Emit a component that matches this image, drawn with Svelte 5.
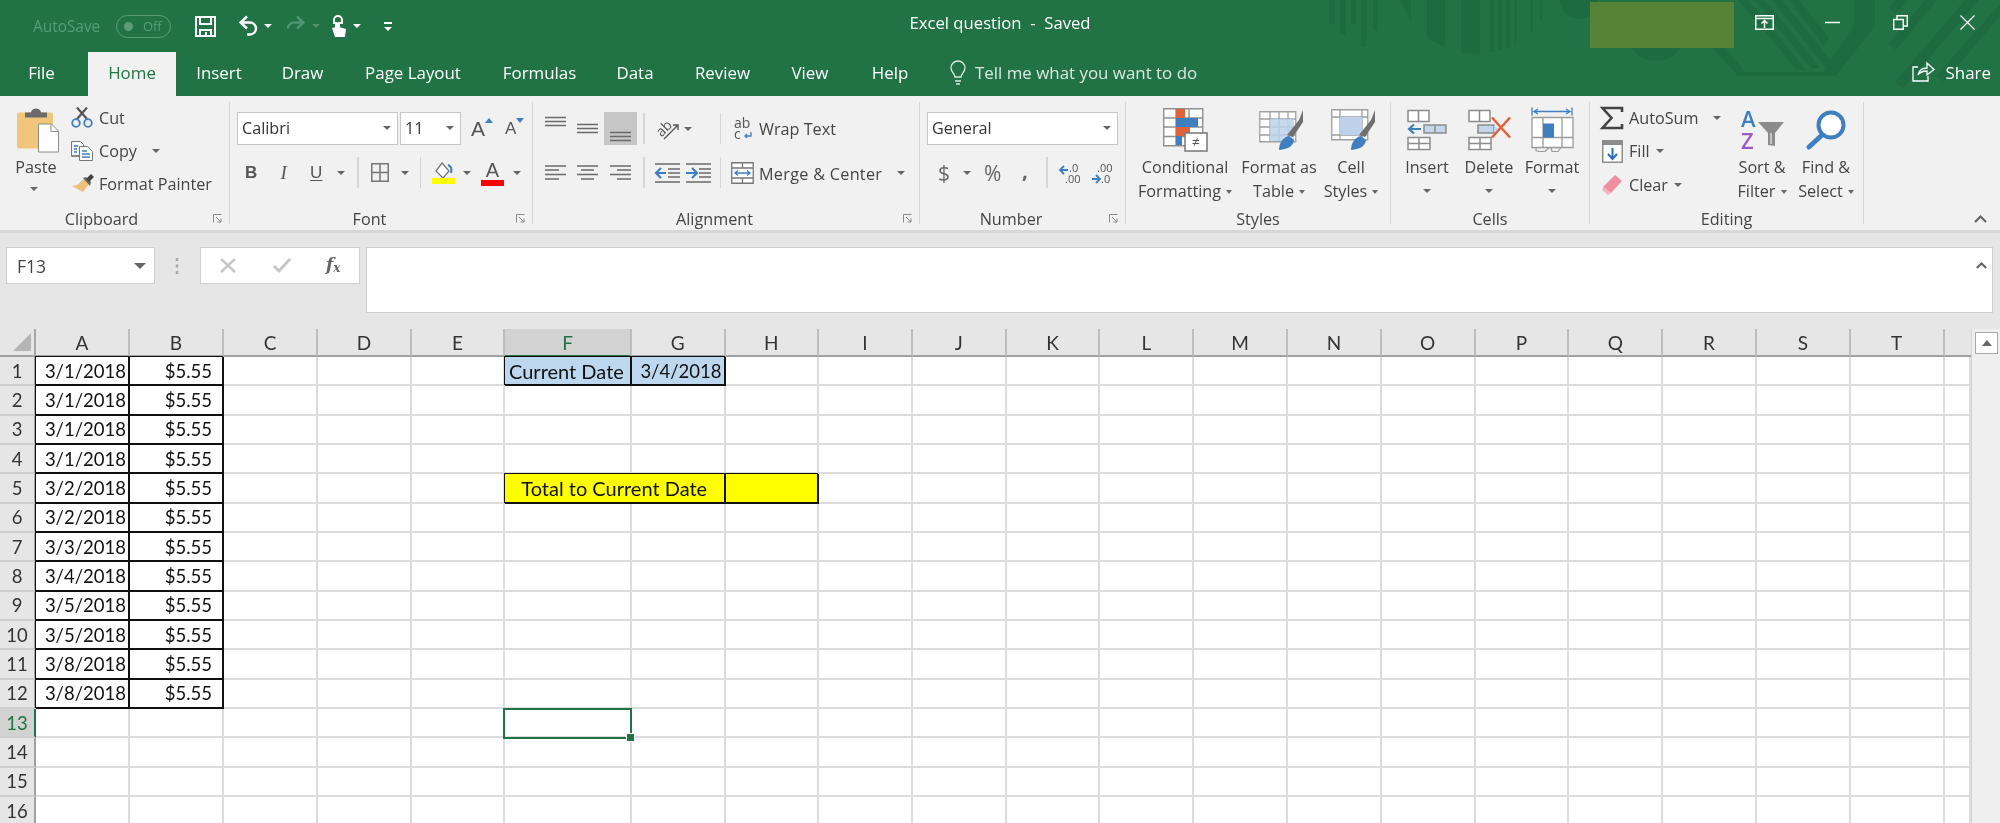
<script>
  const tabs = [
    { label: "File", w: 88 },
    { label: "Home", w: 88, active: true },
    { label: "Insert", w: 86 },
    { label: "Draw", w: 81 },
    { label: "Page Layout", w: 140 },
    { label: "Formulas", w: 113 },
    { label: "Data", w: 78 },
    { label: "Review", w: 97 },
    { label: "View", w: 78 },
    { label: "Help", w: 82 },
  ];

  // A..T plus the sliver of U before the scrollbar
  const columns = [
    ["A", 94], ["B", 94], ["C", 94], ["D", 94], ["E", 93], ["F", 127], ["G", 93.5], ["H", 93.5],
    ["I", 93.8], ["J", 93.8], ["K", 93.8], ["L", 93.8], ["M", 93.8], ["N", 93.8], ["O", 93.8],
    ["P", 93.8], ["Q", 93.8], ["R", 93.8], ["S", 93.8], ["T", 93.8], ["", 26],
  ];
  const gridCols = "36px " + columns.map((c) => c[1] + "px").join(" ");

  const dates = ["3/1/2018", "3/1/2018", "3/1/2018", "3/1/2018", "3/2/2018", "3/2/2018",
    "3/3/2018", "3/4/2018", "3/5/2018", "3/5/2018", "3/8/2018", "3/8/2018"];
  const rows = Array.from({ length: 16 }, (_, i) => i + 1);

  function cellFor(col, row) {
    if (row <= 12 && col === "A") return { text: dates[row - 1], cls: "boxed right num" };
    if (row <= 12 && col === "B") return { text: "$5.55", cls: "boxed money num" };
    if (row === 1 && col === "F") return { text: "Current Date", cls: "boxed blue" };
    if (row === 1 && col === "G") return { text: "3/4/2018", cls: "boxed blue right num" };
    if (row === 5 && col === "F") return { text: "Total to Current Date", cls: "boxed yellow merged" };
    if (row === 5 && col === "H") return { text: "", cls: "boxed yellow" };
    return { text: "", cls: "" };
  }
  const colsFor = (row) => columns.filter((c) => !(row === 5 && c[0] === "G"));
</script>

{#snippet caret()}<span class="caret"></span>{/snippet}

{#snippet launcher()}
  <svg class="launcher" width="10" height="9" viewBox="0 0 10 9"><path d="M.5.5h8M.5.5v8M3 3l5 5M8 4.5V8H4.5" fill="none" stroke="#8a8a8a"/></svg>
{/snippet}

<div class="app">
  <header class="chrome">
    <svg class="art" width="2000" height="96" viewBox="0 0 2000 96" aria-hidden="true">
      <g fill="#1e6b41">
        <rect x="1330" width="5" height="24"/><rect x="1340" width="6" height="35"/>
        <rect x="1351" width="5" height="24"/><rect x="1361" width="5" height="47"/>
        <rect x="1373" width="5" height="31"/>
        <path d="M1400 0h11v21z"/>
        <path d="M1427 0h18v48l-18-10z"/>
        <path d="M1461 0h19v55l-19-2z"/>
        <rect x="1490" width="4" height="52"/><rect x="1498" width="4" height="50"/>
        <rect x="1506" width="4" height="48"/><rect x="1514" width="3" height="44"/>
        <rect x="1530" width="3" height="32"/><rect x="1540" width="2" height="20"/>
        <path d="M1560 0h38a19 19 0 0 1-38 0z"/>
        <path d="M1630 40h52a26 21 0 0 1-52 0z"/>
        <path d="M1705 40l33 36h98l39-50V0h-21v26l-31 46h-78l-26-32z"/>
        <path d="M1738 0h10l58 70h-9zM1755 0h10l55 68h-9zM1772 0h10l50 62-6 6zM1789 0h10l30 38-5 8z"/>
        <path d="M1896 0h12l-12 14-7-6zM1925 0h12l-41 50-8-6zM1965 0h14l-76 88-8-6zM2000 4v12l-56 66-8-6z"/>
      </g>
    </svg>

    <div class="titlebar">
      <div class="qat">
        <span class="autosave">AutoSave</span>
        <span class="toggle"><i></i><b>Off</b></span>
        <svg class="save" width="21" height="21" viewBox="0 0 21 21"><path d="M1 1h19v19H1zM5 1v7h11V1M5 20v-6h11v6M11 16v4" fill="none" stroke="#fff" stroke-width="2"/></svg>
        <svg class="undo" width="20" height="22" viewBox="0 0 20 22"><path d="M9 1.5L2.5 7.5 9 13.5M3 7.5h9a6 6 0 0 1 0 12H9" fill="none" stroke="#fff" stroke-width="2.4"/></svg>
        <span class="caret white q1"></span>
        <svg class="redo" width="20" height="22" viewBox="0 0 20 22"><path d="M11 1.5l6.5 6-6.500 6M17 7.500H8a6 6 0 0 0-6 6" fill="none" stroke="#4f9470" stroke-width="2.4"/></svg>
        <span class="caret dim q2"></span>
        <svg class="touch" width="17" height="24" viewBox="0 0 17 24"><path d="M4 6a4 4 0 0 1 8 0v3H9v4H6V9H4z" fill="none" stroke="#fff" stroke-width="2"/><path d="M6 9v4l-4 1 3 9h10l1-8-7-2V8z" fill="#fff"/></svg>
        <span class="caret white q3"></span>
        <span class="custom"><i></i><span class="caret white"></span></span>
      </div>
      <div class="doc-title">Excel question&nbsp; -&nbsp; Saved</div>
      <div class="winctl">
        <div class="redacted"></div>
        <svg class="wc-disp" width="19" height="15" viewBox="0 0 19 15"><path d="M.75.75h17.500v13.500H.75zM.75 3.500h17.500M9.500 13V6M6.500 8.500l3-3 3 3" fill="none" stroke="#fff" stroke-width="1.500"/></svg>
        <svg class="wc-min" width="15" height="15" viewBox="0 0 15 15"><path d="M0 7.500h15" stroke="#fff" stroke-width="1.500"/></svg>
        <svg class="wc-res" width="15" height="15" viewBox="0 0 15 15"><path d="M.75 4.500h9.500v9.750H.75zM4 4.500V.75h10.250V11h-4" fill="none" stroke="#fff" stroke-width="1.400"/></svg>
        <svg class="wc-close" width="15" height="15" viewBox="0 0 15 15"><path d="M.5.5l14 14M14.500.5l-14 14" stroke="#fff" stroke-width="1.300"/></svg>
      </div>
    </div>

    <nav class="tabs">
      {#each tabs as t}
        <div class="tab" class:active={t.active} class:file={t.label === "File"} style:width="{t.w}px">{t.label}</div>
      {/each}
      <svg class="bulb" width="16" height="24" viewBox="0 0 16 24"><path d="M5 16c0-3-4-5-4-9a7 7 0 0 1 14 0c0 4-4 6-4 9zM5 20h6M6 23h4" fill="none" stroke="#dbe9e1" stroke-width="1.300"/></svg>
      <span class="tell">Tell me what you want to do</span>
      <span class="share">
        <svg width="23" height="20" viewBox="0 0 23 20"><path d="M6 5H1v14h15v-5M6 13c1-5 5-7 9-7V1l7 6.500L15 13V9c-4 0-7 1-9 4z" fill="none" stroke="#fff" stroke-width="1.300"/></svg>
        Share
      </span>
    </nav>
  </header>

  <section class="ribbon">
    <div class="group g-clip">
      <div class="body">
        <div class="big paste">
          <svg width="42" height="45" viewBox="0 0 42 45"><rect y="5" width="36" height="36" rx="2" fill="#f0c67a"/><path d="M8 10V5h6a5 4 0 0 1 10 0h6v5z" fill="#6a6a6a"/><path d="M21.500 16.500h13l7 7v21h-20z" fill="#fff" stroke="#8c8c8c"/><path d="M34 17v7h7" fill="none" stroke="#8c8c8c"/></svg>
          <span class="line">Paste</span>
          {@render caret()}
        </div>
        <div class="stack clip-stack">
          <div class="row"><span class="ico">
            <svg width="22" height="21" viewBox="0 0 22 21"><path d="M6 12L16 .5M16 12L6 .5" stroke="#555" stroke-width="2.200"/><circle cx="5" cy="16" r="3.800" fill="none" stroke="#3f7fbf" stroke-width="1.800"/><circle cx="17" cy="16" r="3.800" fill="none" stroke="#3f7fbf" stroke-width="1.800"/></svg>
          </span>Cut</div>
          <div class="row"><span class="ico">
            <svg width="22" height="20" viewBox="0 0 22 20"><path d="M.5.500h9l3 3v3M8 15H.5z" fill="#fff" stroke="#777"/><path d="M.5.500v14.500H8" fill="none" stroke="#777"/><path d="M8.500 5.500h8l5 5v9h-13z" fill="#fff" stroke="#777"/><path d="M3 5h4M3 8h3M3 11h3M11 10h5M11 13h8M11 16h8" stroke="#3f7fbf" stroke-width="1.300"/></svg>
          </span>Copy<span class="caret copy-caret"></span></div>
          <div class="row"><span class="ico">
            <svg width="23" height="20" viewBox="0 0 23 20"><path d="M13 5l5 5-6 8-11-6 5-1z" fill="#eec07e"/><path d="M12 4l3-1 5 5-1 4z" fill="#666"/><path d="M15 5l5-5 3 3-5 5z" fill="#444"/></svg>
          </span>Format Painter</div>
        </div>
      </div>
      <div class="label l-clip">Clipboard</div>
      {@render launcher()}
    </div>

    <div class="group g-font">
      <div class="body col">
        <div class="r1">
          <div class="combo font-name"><span>Calibri</span>{@render caret()}</div>
          <div class="combo font-size"><span>11</span>{@render caret()}</div>
          <span class="grow">A<svg width="8" height="5" viewBox="0 0 8 5"><path d="M4 0l4 5H0z" fill="#3f7fbf"/></svg></span>
          <span class="shrink">A<svg width="8" height="5" viewBox="0 0 8 5"><path d="M4 5L0 0h8z" fill="#3f7fbf"/></svg></span>
        </div>
        <div class="r2">
          <span class="tb biu bold">B</span>
          <span class="tb biu ital">I</span>
          <span class="tb biu under">U</span>
          <span class="caret biu-c"></span>
          <span class="sep s-borders"></span>
          <svg class="borders" width="18" height="19" viewBox="0 0 18 19"><path d="M.75.750h16.500v17.500H.75zM9 .750v17.500M.75 9.500h16.500" fill="none" stroke="#777" stroke-width="1.500"/></svg>
          <span class="caret bord-c"></span>
          <span class="sep s-fill"></span>
          <svg class="fillc" width="23" height="22" viewBox="0 0 23 22"><path d="M10 1l7 8-6 7-7-7z" fill="#fff" stroke="#777" stroke-width="1.300"/><path d="M16 3c3 1 4 4 3 8" fill="none" stroke="#3f7fbf" stroke-width="2"/><rect y="16" width="23" height="6" fill="#ffff00"/></svg>
          <span class="caret fill-c"></span>
          <span class="fontcolor">A</span>
          <span class="caret fc-c"></span>
        </div>
      </div>
      <div class="label l-launch">Font</div>
      {@render launcher()}
    </div>

    <div class="group g-align">
      <div class="body col">
        <div class="r1">
          <span class="tb al"><svg class="up" width="21" height="12" viewBox="0 0 21 12"><path d="M0 1.500h21M0 5.500h21M0 9.500h21" stroke="#6a6a6a" stroke-width="1.500"/></svg></span>
          <span class="tb al"><svg width="21" height="12" viewBox="0 0 21 12"><path d="M0 1.500h21M0 5.500h21M0 9.500h21" stroke="#6a6a6a" stroke-width="1.500"/></svg></span>
          <span class="tb al on"><svg class="down" width="21" height="12" viewBox="0 0 21 12"><path d="M0 2.500h21M0 6.500h21M0 10.500h21" stroke="#6a6a6a" stroke-width="1.500"/></svg></span>
          <span class="sep v1"></span>
          <span class="orient"><svg width="25" height="24" viewBox="0 0 25 24"><text x="1" y="17" transform="rotate(-45 8 12)" class="svgt">ab</text><path d="M9 22L23 8M18 8h5v5" fill="none" stroke="#555" stroke-width="1.400"/></svg>{@render caret()}</span>
          <span class="sep v2"></span>
          <span class="wide"><svg width="20" height="22" viewBox="0 0 20 22"><text x="0" y="10" class="svgt">ab</text><text x="0" y="21" class="svgt">c</text><path d="M17 14v4h-6M13 16l-2 2 2 2" fill="none" stroke="#3f7fbf" stroke-width="1.300"/></svg>Wrap Text</span>
        </div>
        <div class="r2">
          <span class="tb al"><svg width="21" height="15" viewBox="0 0 21 15"><path d="M0 1h21M0 5h14M0 9.500h21M0 14h14" stroke="#6a6a6a" stroke-width="1.500"/></svg></span>
          <span class="tb al"><svg width="21" height="15" viewBox="0 0 21 15"><path d="M0 1h21M4 5h13M0 9.500h21M4 14h13" stroke="#6a6a6a" stroke-width="1.500"/></svg></span>
          <span class="tb al"><svg width="21" height="15" viewBox="0 0 21 15"><path d="M0 1h21M7 5h14M0 9.500h21M7 14h14" stroke="#6a6a6a" stroke-width="1.500"/></svg></span>
          <span class="sep v1"></span>
          <span class="indents">
            <svg width="25" height="20" viewBox="0 0 25 20"><path d="M0 1h25M13 6h12M13 10h12M13 14h12M0 19h25" stroke="#6a6a6a" stroke-width="1.500"/><path d="M1 10h10M6 5l-5 5 5 5" fill="none" stroke="#3f7fbf" stroke-width="2.200"/></svg>
            <svg width="25" height="20" viewBox="0 0 25 20"><path d="M0 1h25M13 6h12M13 10h12M13 14h12M0 19h25" stroke="#6a6a6a" stroke-width="1.500"/><path d="M0 10h10M6 5l5 5-5 5" fill="none" stroke="#3f7fbf" stroke-width="2.200"/></svg>
          </span>
          <span class="sep v2"></span>
          <span class="wide merge"><svg width="23" height="22" viewBox="0 0 23 22"><path d="M.75.750h21.500v20.500H.75zM.75 6h21.500M.75 16h21.500M11.500 1v5M11.500 16v5" fill="#fff" stroke="#777" stroke-width="1.300"/><path d="M4 11h15M7 8.500L4 11l3 2.500M16 8.500l3 2.500-3 2.500" fill="none" stroke="#3f7fbf" stroke-width="1.300"/></svg><span class="mtext">Merge &amp; Center</span><span class="caret m-c"></span></span>
        </div>
      </div>
      <div class="label l-launch">Alignment</div>
      {@render launcher()}
    </div>

    <div class="group g-num">
      <div class="body col">
        <div class="r1"><div class="combo general"><span>General</span>{@render caret()}</div></div>
        <div class="r2">
          <span class="dollar">$</span><span class="caret d-c"></span>
          <span class="pct">%</span>
          <span class="comma">,</span>
          <span class="sep n-s"></span>
          <span class="dec"><svg width="21" height="22" viewBox="0 0 21 22"><path d="M0 8h8M4 4L0 8l4 4" fill="none" stroke="#3f7fbf" stroke-width="1.800"/><text x="9" y="10" class="svgd">.0</text><text x="5" y="21" class="svgd">.00</text></svg></span>
          <span class="dec d2"><svg width="21" height="22" viewBox="0 0 21 22"><text x="5" y="10" class="svgd">.00</text><path d="M0 17h8M4 13l4 4-4 4" fill="none" stroke="#3f7fbf" stroke-width="1.800"/><text x="9" y="21" class="svgd">.0</text></svg></span>
        </div>
      </div>
      <div class="label l-launch">Number</div>
      {@render launcher()}
    </div>

    <div class="group g-styles">
      <div class="body">
        <div class="big s1">
          <svg width="44" height="44" viewBox="0 0 44 44"><path d="M.75.750h39v37h-39zM.75 10h39M.75 19h39M.75 28.500h39M13 .750v37M26 .750v37" fill="#fff" stroke="#909090" stroke-width="1.400"/><rect x="13" y="1" width="9" height="9" fill="#e0623a"/><rect x="13" y="10" width="22" height="9" fill="#3f7fbf"/><rect x="13" y="19" width="14" height="9" fill="#e0623a"/><rect x="13" y="28" width="6" height="9" fill="#3f7fbf"/><rect x="22" y="25" width="22" height="18" fill="#fff" stroke="#777" stroke-width="1.500"/><text x="33" y="39" text-anchor="middle" class="svgt">≠</text></svg>
          <span class="line">Conditional</span><span class="line">Formatting{@render caret()}</span>
        </div>
        <div class="big s2">
          <svg width="44" height="44" viewBox="0 0 44 44"><path d="M.75 3.750h36v30h-36zM.75 11h36M.75 19h36M.75 27h36M11 3.750v30M20 3.750v30M29 3.750v30" fill="#fff" stroke="#a0a0a0" stroke-width="1.300"/><rect x="11" y="11" width="24" height="22" fill="#bdd2ea" opacity=".85"/><path d="M28 27l12-15 4-10 .0 12-10 15z" fill="#6f6f6f"/><path d="M20 42c0-7 4-13 10-14l5 4c-1 6-5 9-15 10z" fill="#3f7fbf"/></svg>
          <span class="line">Format as</span><span class="line">Table{@render caret()}</span>
        </div>
        <div class="big s3">
          <svg width="44" height="44" viewBox="0 0 44 44"><path d="M.75 1.750h36v30h-36zM.75 9h36M.75 27h36M9 1.750v30M31 1.750v30" fill="#fff" stroke="#a0a0a0" stroke-width="1.300"/><rect x="9" y="9" width="22" height="18" fill="#bdd2ea"/><path d="M28 27l12-15 4-10 0 12-10 15z" fill="#6f6f6f"/><path d="M20 42c0-7 4-13 10-14l5 4c-1 6-5 9-15 10z" fill="#3f7fbf"/></svg>
          <span class="line">Cell</span><span class="line">Styles{@render caret()}</span>
        </div>
      </div>
      <div class="label">Styles</div>
    </div>

    <div class="group g-cells">
      <div class="body">
        <div class="big">
          <svg width="40" height="41" viewBox="0 0 40 41"><g fill="#fff" stroke="#8c8c8c" stroke-width="1.500"><path d="M1 1h21v11H1zM11.500 1v11M1 28h22v12H1zM12 28v12M1 34h22"/><path d="M17 15.500h22v8H17z" fill="#c3d6ec"/><path d="M28 15.500v8"/></g><path d="M2 19.500h12M7 15l-5 4.500L7 24" fill="none" stroke="#3f7fbf" stroke-width="2.200"/></svg>
          <span class="line">Insert</span><span class="line cline">{@render caret()}</span>
        </div>
        <div class="big">
          <svg width="43" height="41" viewBox="0 0 43 41"><g fill="#fff" stroke="#8c8c8c" stroke-width="1.500"><path d="M1 1h21v11H1zM11.500 1v11M1 28h22v12H1zM12 28v12M1 34h22"/><path d="M10 15.500h16v8H10z" fill="#c3d6ec"/></g><path d="M26 16l5 3.500-5 3.500z" fill="#c3d6ec"/><path d="M24 8l18 20M42 8L24 28" stroke="#e0623a" stroke-width="2.600"/></svg>
          <span class="line">Delete</span><span class="line cline">{@render caret()}</span>
        </div>
        <div class="big">
          <svg width="43" height="45" viewBox="0 0 43 45"><path d="M1 0v8M41 0v8M3 4h36M7 1.500L3 4l4 2.500M35 1.500L39 4l-4 2.500" fill="none" stroke="#3f7fbf" stroke-width="1.300"/><path d="M1 10h41v30H1zM1 30h41M12 10v30M31 10v30" fill="#fff" stroke="#9a9a9a" stroke-width="1.300"/><rect x="12" y="16" width="11" height="14" fill="#3f7fbf"/><path d="M5 40v3l3 1h6l4-4M20 40l1 4h6l3-4" fill="none" stroke="#9a9a9a" stroke-width="1.200"/></svg>
          <span class="line">Format</span><span class="line cline">{@render caret()}</span>
        </div>
      </div>
      <div class="label">Cells</div>
    </div>

    <div class="group g-edit">
      <div class="body">
        <div class="stack edit-stack">
          <div class="row"><span class="ico"><svg width="22" height="22" viewBox="0 0 22 22"><path d="M21 5V1H1.500l9 10-9 10H21v-4" fill="none" stroke="#444" stroke-width="2.600"/></svg></span>AutoSum<span class="caret as-c"></span></div>
          <div class="row"><span class="ico"><svg width="21" height="23" viewBox="0 0 21 23"><rect x=".75" y=".75" width="19.500" height="21.500" fill="#fff" stroke="#8c8c8c" stroke-width="1.500"/><rect x="1" y="1" width="19" height="4" fill="#8c8c8c"/><path d="M10.500 8v11M6 14l4.500 5 4.500-5" fill="none" stroke="#2b6fb5" stroke-width="2"/></svg></span>Fill{@render caret()}</div>
          <div class="row"><span class="ico"><svg width="20" height="20" viewBox="0 0 20 20"><path d="M13 0l7 6-11 12-8-6z" fill="#ef8ea0"/><path d="M1 12l8 6-3 2-6-5z" fill="#f4b4c0"/></svg></span>Clear{@render caret()}</div>
        </div>
        <div class="big sort">
          <svg width="43" height="40" viewBox="0 0 43 40"><text x="0" y="17" class="az a">A</text><text x="0" y="39" class="az z">Z</text><path d="M17 12h26L34 23v13l-7-1V23z" fill="#8c8c8c"/><path d="M30 23v11" stroke="#fff"/></svg>
          <span class="line">Sort &amp;</span><span class="line">Filter{@render caret()}</span>
        </div>
        <div class="big find">
          <svg width="40" height="40" viewBox="0 0 40 40"><circle cx="25" cy="15" r="12.500" fill="#fff" stroke="#3f7fbf" stroke-width="4"/><path d="M16 25L3 37" stroke="#3f7fbf" stroke-width="5" stroke-linecap="round"/></svg>
          <span class="line">Find &amp;</span><span class="line">Select{@render caret()}</span>
        </div>
      </div>
      <div class="label">Editing</div>
    </div>

    <svg class="collapse" width="13" height="8" viewBox="0 0 13 8"><path d="M1 7l5.500-5.500L12 7" fill="none" stroke="#666" stroke-width="2.200"/></svg>
  </section>

  <section class="formula">
    <div class="namebox"><span>F13</span><span class="caret big-caret"></span></div>
    <svg class="grip" width="4" height="16" viewBox="0 0 4 16"><path d="M2 0v3M2 6.500v3M2 13v3" stroke="#a8a8a8" stroke-width="2.500"/></svg>
    <div class="fbtns">
      <svg width="16" height="15" viewBox="0 0 16 15"><path d="M1 1l14 13M15 1L1 14" stroke="#c6c6c6" stroke-width="2.400"/></svg>
      <svg width="18" height="15" viewBox="0 0 18 15"><path d="M1 8l5 5L17 1" fill="none" stroke="#c6c6c6" stroke-width="2.800"/></svg>
      <span class="fx">f<sub>x</sub></span>
    </div>
    <div class="finput">
      <svg width="11" height="7" viewBox="0 0 11 7"><path d="M.8 6L5.500 1.500 10.200 6" fill="none" stroke="#666" stroke-width="2.200"/></svg>
    </div>
  </section>

  <section class="sheetwrap">
    <div class="sheet" style:grid-template-columns={gridCols}>
      <div class="corner"><svg width="18" height="18" viewBox="0 0 18 18"><path d="M18 0v18H0z" fill="#b5b5b5"/></svg></div>
      {#each columns as c, i}
        <div class="colhead" class:sel={c[0] === "F"} class:last={i === columns.length - 1}>{c[0]}</div>
      {/each}

      {#each rows as r}
        <div class="rowhead" class:sel={r === 13}>{r}</div>
        {#each colsFor(r) as c}
          {@const cell = cellFor(c[0], r)}
          <div class="cell {cell.cls}">{cell.text}</div>
        {/each}
      {/each}

      <div class="selection"><i></i></div>
    </div>
    <aside class="scroll">
      <div class="up-btn"><span></span></div>
    </aside>
  </section>
</div>

<style>
  :global(body) {
    margin: 0;
    background: #fff;
  }

  .app {
    width: 2000px;
    height: 823px;
    overflow: hidden;
    font-family: "Open Sans", "Noto Sans", sans-serif;
    font-size: 16.2px;
    color: #444;
    background: #e6e6e6;
    filter: blur(0.35px);
  }

  svg {
    display: block;
    flex: none;
    overflow: visible;
  }

  /* window chrome */
  .chrome {
    position: relative;
    height: 96px;
    background: #217346;
    color: #fff;
    overflow: hidden;
  }
  .art {
    position: absolute;
    left: 0;
    top: 0;
  }
  .titlebar {
    position: relative;
    display: grid;
    grid-template-columns: 1fr auto 1fr;
    height: 52px;
  }
  .qat {
    display: flex;
    align-items: center;
    padding-left: 33px;
  }
  .autosave {
    width: 83px;
    color: #5a9c79;
    font-size: 15.4px;
  }
  .toggle {
    box-sizing: border-box;
    display: flex;
    align-items: center;
    width: 55px;
    height: 23px;
    border: 1.5px solid #5a9c79;
    border-radius: 12px;
    padding-left: 7px;
    color: #5a9c79;
  }
  .toggle i {
    width: 9px;
    height: 9px;
    border-radius: 50%;
    background: #5a9c79;
  }
  .toggle b {
    font-weight: 400;
    font-size: 13px;
    margin-left: 10px;
  }
  .save { margin-left: 24px; }
  .undo { margin-left: 22px; }
  .q1 { margin-left: 9px; }
  .redo { margin-left: 14px; }
  .q2 { margin-left: 9px; }
  .touch { margin-left: 10px; }
  .q3 { margin-left: 12px; }
  .custom {
    display: flex;
    flex-direction: column;
    align-items: center;
    gap: 3px;
    margin-left: 23px;
  }
  .custom i {
    width: 8px;
    height: 2px;
    background: #fff;
  }
  .doc-title {
    align-self: center;
    font-size: 16.7px;
    white-space: nowrap;
    margin-top: -8px;
  }
  .winctl {
    display: flex;
    justify-content: flex-end;
    align-items: flex-start;
    padding-right: 25px;
  }
  .redacted {
    width: 144px;
    height: 46px;
    margin: 2px 21px 0 0;
    background: #558235;
  }
  .winctl svg { margin-top: 15px; }
  .wc-min { margin-left: 51px; }
  .wc-res { margin-left: 53px; }
  .wc-close { margin-left: 52px; }

  .tabs {
    position: relative;
    display: flex;
    align-items: center;
    height: 44px;
    font-size: 16.9px;
  }
  .tab {
    box-sizing: border-box;
    display: flex;
    align-items: center;
    justify-content: center;
    height: 44px;
    padding-bottom: 4px;
  }
  .tab.file { padding-right: 5px; }
  .tab.active {
    background: #f1f1f1;
    color: #217346;
  }
  .bulb { margin-left: 19px; margin-top: -3px; }
  .tell {
    margin-left: 9px;
    margin-top: -4px;
    color: #dbe9e1;
  }
  .share {
    display: flex;
    align-items: center;
    gap: 11px;
    margin-left: auto;
    margin-top: -4px;
    padding-right: 9px;
  }

  /* ribbon */
  .ribbon {
    position: relative;
    display: flex;
    height: 134px;
    background: #f1f1f1;
    border-bottom: 3px solid #d8d8d8;
  }
  .group {
    position: relative;
    box-sizing: border-box;
    display: flex;
    flex-direction: column;
    height: 122px;
    margin-top: 6px;
    border-right: 1.5px solid #d6d6d6;
    white-space: nowrap;
  }
  .g-clip { width: 230px; }
  .g-font { width: 303px; }
  .g-align { width: 387px; }
  .g-num { width: 206px; }
  .g-styles { width: 265px; }
  .g-cells { width: 199px; }
  .g-edit { width: 274px; }

  .body {
    display: flex;
    flex: none;
    height: 107px;
  }
  .body.col {
    flex-direction: column;
    padding-top: 10px;
    height: 97px;
  }
  .label {
    text-align: center;
    line-height: 18px;
    margin-top: 1px;
  }
  .l-clip { padding-right: 26px; }
  .l-launch { padding-right: 23px; }
  .launcher {
    position: absolute;
    right: 6px;
    bottom: 1px;
  }

  .caret {
    display: inline-block;
    flex: none;
    width: 0;
    height: 0;
    margin-left: 6px;
    vertical-align: middle;
    border-left: 4px solid transparent;
    border-right: 4px solid transparent;
    border-top: 4.5px solid #666;
  }
  .caret.white { border-top-color: #fff; }
  .caret.dim { border-top-color: #4f9470; }
  .custom .caret { margin-left: 0; }

  .big {
    display: flex;
    flex-direction: column;
    align-items: center;
    box-sizing: border-box;
    padding-top: 5px;
    height: 107px;
  }
  .big > svg {
    height: 46px;
    margin-bottom: 1.5px;
  }
  .line {
    height: 24px;
    line-height: 24px;
  }
  .cline { display: flex; align-items: center; }
  .cline .caret { margin: 0; }

  .stack { display: flex; flex-direction: column; }
  .row {
    display: flex;
    align-items: center;
    height: 33px;
  }
  .ico {
    display: flex;
    justify-content: center;
    align-items: center;
    width: 22px;
    margin-right: 6px;
  }

  .paste {
    width: 42px;
    margin-left: 17px;
  }
  .paste .line { margin-right: 4px; }
  .paste .caret { margin: 8px 8px 0 0; }
  .clip-stack { margin-left: 12px; margin-top: -1px; }
  .copy-caret { margin-left: 15px; }

  .r1 {
    display: flex;
    align-items: center;
    height: 33px;
  }
  .r2 {
    display: flex;
    align-items: center;
    height: 31px;
    margin-top: 12px;
  }

  .combo {
    box-sizing: border-box;
    display: flex;
    align-items: center;
    justify-content: space-between;
    height: 33px;
    padding: 0 6px 1px 4px;
    background: #fff;
    border: 1.5px solid #c6c6c6;
    color: #333;
  }
  .g-font .r1 { padding-left: 7px; }
  .g-font .r2 { padding-left: 5px; }
  .font-name { width: 161px; }
  .font-size { width: 61px; margin-left: 2px; }

  .grow, .shrink {
    display: flex;
    align-items: flex-start;
    line-height: 26px;
    color: #555;
    font-family: "Liberation Sans", sans-serif;
  }
  .grow { margin-left: 10px; font-size: 21px; }
  .shrink { margin-left: 12px; font-size: 17px; }
  .grow svg, .shrink svg { margin-top: 2px; }

  .tb {
    display: flex;
    justify-content: center;
    align-items: center;
    flex: none;
    width: 32.5px;
  }
  .biu {
    font-family: "Liberation Sans", sans-serif;
    font-size: 17px;
    color: #555;
  }
  .bold { font-weight: 700; }
  .ital { font-style: italic; font-family: "Liberation Serif", serif; font-size: 19px; }
  .under { text-decoration: underline; text-underline-offset: 2px; }
  .biu-c { margin-left: 4.5px; }
  .sep {
    flex: none;
    width: 1.5px;
    height: 31px;
    background: #d6d6d6;
  }
  .s-borders { margin-left: 12px; }
  .borders { margin-left: 12px; }
  .bord-c { margin-left: 12px; }
  .s-fill { margin-left: 11px; }
  .fillc { margin-left: 11px; }
  .fill-c { margin-left: 8px; }
  .fontcolor {
    box-sizing: border-box;
    width: 23px;
    height: 26px;
    margin-left: 10px;
    font-family: "Liberation Sans", sans-serif;
    font-size: 20px;
    line-height: 20px;
    text-align: center;
    color: #555;
    border-bottom: 6px solid #f00;
  }
  .fc-c { margin-left: 9px; }

  .g-align .r1, .g-align .r2 { padding-left: 6px; }
  .al { height: 33px; }
  .on { background: #c6c6c6; }
  .al .up { margin-bottom: 13px; }
  .al .down { margin-top: 14px; }
  .v1 { margin-left: 6.500px; }
  .orient {
    display: flex;
    align-items: center;
    width: 75px;
    padding-left: 10px;
    box-sizing: border-box;
  }
  .orient .caret { margin-left: 4px; }
  .indents {
    display: flex;
    gap: 6px;
    width: 75px;
    padding-left: 10px;
    box-sizing: border-box;
  }
  .wide {
    display: flex;
    align-items: center;
    gap: 5px;
    margin-left: 13px;
    color: #444;
  }
  .merge { margin-left: 10px; }
  .mtext { padding-top: 2px; letter-spacing: 0.3px; }
  .m-c { margin-left: 10px; }
  .svgt {
    font-family: "Open Sans", sans-serif;
    font-size: 14px;
    fill: #555;
  }
  .svgd {
    font-family: "Open Sans", sans-serif;
    font-size: 11px;
    fill: #555;
  }

  .g-num .r1 { padding-left: 7px; }
  .general { width: 191px; padding-right: 6px; }
  .g-num .r2 { padding-left: 18px; color: #666; }
  .dollar { font-size: 21px; width: 12px; }
  .d-c { margin-left: 13px; }
  .pct { font-size: 21px; margin-left: 13px; width: 20px; }
  .comma { font-size: 21px; font-weight: 700; margin-left: 18px; width: 10px; margin-top: -6px; }
  .n-s { margin-left: 14px; }
  .dec { margin-left: 12px; }
  .dec.d2 { margin-left: 11px; }

  .g-styles .body { padding-left: 12px; }
  .s1, .s2 { width: 94px; }
  .s2 > svg { margin-left: 4px; }
  .s3 { width: 50px; }
  .s3 > svg { margin-left: 4px; }
  .big .line .caret { margin-left: 5px; border-left-width: 3.500px; border-right-width: 3.500px; border-top-width: 4px; }
  .big .cline .caret { margin-left: 0; border-left-width: 4px; border-right-width: 4px; border-top-width: 4.500px; }

  .g-cells .body { padding-left: 5px; }
  .g-cells .big { width: 62px; }
  .g-cells .big:last-child { width: 64px; }

  .edit-stack { margin-left: 11px; margin-top: -1px; width: 132px; }
  .edit-stack .row { height: 33.500px; }
  .as-c { margin-left: 15px; }
  .sort { width: 58px; }
  .find { width: 70px; }
  .az {
    font-family: "Open Sans", sans-serif;
    font-size: 22px;
    font-weight: 600;
  }
  .az.a { fill: #3f7fbf; }
  .az.z { fill: #9a5cc0; }

  .collapse {
    position: absolute;
    right: 13px;
    bottom: 7px;
  }

  /* formula bar */
  .formula {
    display: flex;
    align-items: flex-start;
    height: 96px;
    padding: 14px 7px 0 6px;
    box-sizing: border-box;
    background: #e6e6e6;
  }
  .namebox {
    box-sizing: border-box;
    display: flex;
    align-items: center;
    justify-content: space-between;
    width: 149px;
    height: 37px;
    padding: 0 8px 0 10px;
    background: #fff;
    border: 1.5px solid #cfcfcf;
    font-size: 17.5px;
    color: #444;
  }
  .big-caret {
    border-left-width: 6px;
    border-right-width: 6px;
    border-top-width: 6px;
  }
  .grip { margin: 11px 0 0 20px; }
  .fbtns {
    box-sizing: border-box;
    display: flex;
    align-items: center;
    width: 160px;
    height: 37px;
    margin-left: 21px;
    padding-left: 19px;
    background: #fff;
    border: 1.5px solid #cfcfcf;
  }
  .fbtns svg:nth-child(2) { margin-left: 37px; }
  .fx {
    margin-left: 35px;
    font-family: "DejaVu Serif", serif;
    font-style: italic;
    font-weight: 700;
    font-size: 17px;
    line-height: 20px;
    color: #666;
  }
  .fx sub { font-size: 12px; vertical-align: -2px; }
  .finput {
    box-sizing: border-box;
    flex: 1;
    display: flex;
    justify-content: flex-end;
    height: 66px;
    margin-left: 6px;
    padding: 14px 5px 0 0;
    background: #fff;
    border: 1.5px solid #cfcfcf;
  }

  /* sheet */
  .sheetwrap {
    display: flex;
    background: #fff;
  }
  .sheet {
    position: relative;
    display: grid;
    grid-template-rows: 28px repeat(16, 29.35px);
    width: 1971px;
    flex: none;
    font-family: Lato, "Liberation Sans", sans-serif;
    font-size: 20px;
    color: #111;
    border-right: 1px solid #d4d4d4;
  }
  .corner {
    display: flex;
    align-items: center;
    justify-content: flex-end;
    padding-right: 3px;
    background: #e6e6e6;
    border-right: 2px solid #a8a8a8;
    border-bottom: 2px solid #a0a0a0;
  }
  .colhead {
    box-sizing: border-box;
    display: flex;
    align-items: center;
    justify-content: center;
    font-size: 19px;
    background: #e6e6e6;
    border-right: 2px solid #bdbdbd;
    border-bottom: 2px solid #a0a0a0;
    color: #333;
  }
  .colhead.last { border-right: none; }
  .colhead.sel {
    background: #d2d2d2;
    color: #217346;
    border-bottom-color: #217346;
  }
  .rowhead {
    box-sizing: border-box;
    display: flex;
    align-items: center;
    justify-content: center;
    font-size: 18.5px;
    background: #e6e6e6;
    border-right: 2px solid #a0a0a0;
    border-bottom: 2px solid #cfcfcf;
    color: #333;
  }
  .rowhead.sel {
    background: #d2d2d2;
    color: #217346;
    border-right-color: #217346;
  }
  .cell {
    box-sizing: border-box;
    display: flex;
    align-items: center;
    padding: 0 4px;
    min-width: 0;
    white-space: nowrap;
    border-right: 2px solid #dcdcdc;
    border-bottom: 2px solid #dcdcdc;
  }
  .num { font-size: 18.5px; }
  .right { justify-content: flex-end; padding-right: 2px; }
  .money { justify-content: flex-end; padding-right: 10px; }
  .boxed {
    position: relative;
    border-color: #111;
    box-shadow: -1px -1px 0 #111;
  }
  .blue { background: #bdd7ee; }
  .yellow { background: #ff0; }
  .merged {
    grid-column: span 2;
    justify-content: center;
  }

  .selection {
    position: absolute;
    left: 503px;
    top: 379px;
    box-sizing: border-box;
    width: 129px;
    height: 31px;
    border: 2.500px solid #217346;
  }
  .selection i {
    position: absolute;
    right: -5px;
    bottom: -5px;
    width: 7px;
    height: 7px;
    background: #217346;
    border: 1px solid #fff;
  }

  .scroll {
    flex: 1;
    box-sizing: border-box;
    height: 494px;
    padding: 3px 2px 0 3px;
    background: #efefef;
  }
  .up-btn {
    display: flex;
    justify-content: center;
    align-items: center;
    box-sizing: border-box;
    height: 22px;
    background: #fff;
    border: 1.5px solid #a8a8a8;
  }
  .up-btn span {
    width: 0;
    height: 0;
    border-left: 5px solid transparent;
    border-right: 5px solid transparent;
    border-bottom: 6px solid #666;
  }
</style>
